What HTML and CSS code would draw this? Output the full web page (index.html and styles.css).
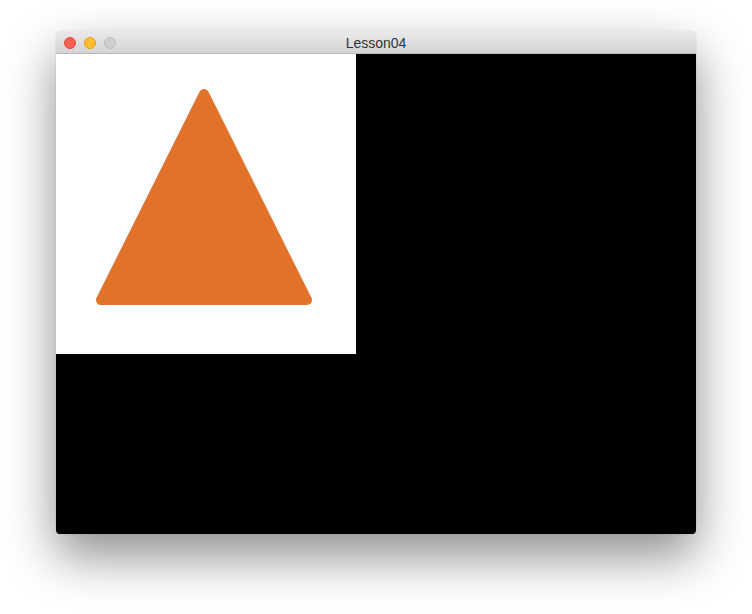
FILE: index.html
```html
<!DOCTYPE html>
<html>
<head>
<meta charset="utf-8">
<link rel="stylesheet" href="styles.css">
</head>
<body>
<div class="window">
  <div class="titlebar">
    <div class="lights">
      <span class="light red"></span>
      <span class="light yellow"></span>
      <span class="light gray"></span>
    </div>
    <div class="title">Lesson04</div>
  </div>
  <div class="content">
    <div class="viewport">
      <svg width="300" height="300" viewBox="0 0 300 300">
        <polygon points="148,40 45,246 251,246" fill="#e07229" stroke="#e07229" stroke-width="10" stroke-linejoin="round"/>
      </svg>
    </div>
  </div>
</div>
</body>
</html>
```
FILE: styles.css
```css
html, body {
  margin: 0;
  background: #ffffff;
}
body {
  padding: 31px 0 0 56px;
  width: 752px;
  height: 614px;
  box-sizing: border-box;
  overflow: hidden;
  font-family: "Liberation Sans", Arial, sans-serif;
}
.window {
  width: 640px;
  border-radius: 5px 5px 4px 4px;
  overflow: hidden;
  box-shadow: 0 22px 50px rgba(0, 0, 0, 0.45), 0 0 1px rgba(0, 0, 0, 0.3);
}
.titlebar {
  position: relative;
  height: 22px;
  background: linear-gradient(#ebe9eb, #d5d3d5);
  border-bottom: 1px solid #b9b7b9;
  display: flex;
  align-items: center;
  justify-content: center;
}
.lights {
  position: absolute;
  left: 8px;
  top: 6px;
  display: flex;
  gap: 8px;
}
.light {
  width: 12px;
  height: 12px;
  border-radius: 50%;
  box-sizing: border-box;
}
.red { background: #fc5f57; border: 1px solid #e2463f; }
.yellow { background: #fdbd2e; border: 1px solid #e1a116; }
.gray { background: #d0ced0; border: 1px solid #bdbbbd; }
.title {
  font-size: 14px;
  line-height: 16px;
  padding-top: 2px;
  color: #333333;
}
.content {
  height: 480px;
  background: #000000;
}
.viewport {
  width: 300px;
  height: 300px;
  background: #ffffff;
}
.viewport svg {
  display: block;
}
```
